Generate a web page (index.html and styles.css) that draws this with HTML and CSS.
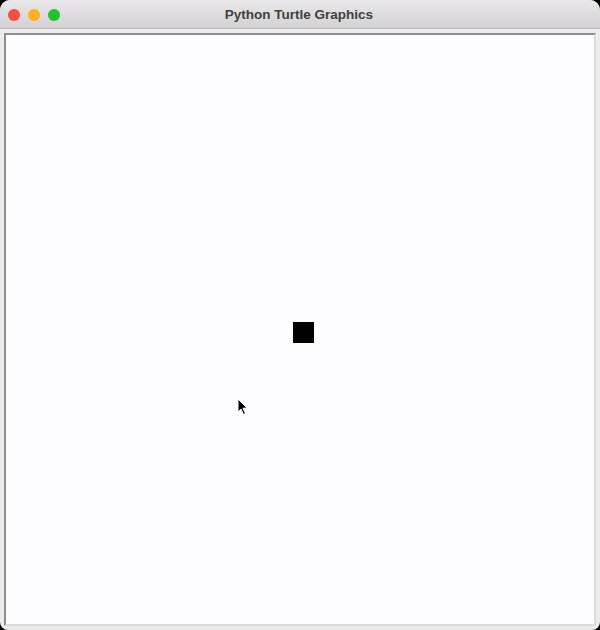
FILE: index.html
```html
<!DOCTYPE html>
<html>
<head>
<meta charset="utf-8">
<link rel="stylesheet" href="styles.css">
</head>
<body>
<div class="window">
  <div class="titlebar">
    <div class="lights">
      <span class="light red"></span>
      <span class="light yellow"></span>
      <span class="light green"></span>
    </div>
    <div class="title">Python Turtle Graphics</div>
  </div>
  <div class="content">
    <div class="canvas">
      <div class="turtle"></div>
      <svg class="cursor" width="12" height="18" viewBox="0 0 12 18">
        <path d="M1 1 L1 14 L4 11 L6.5 16.5 L8.5 15.6 L6 10.2 L10.2 10.2 Z" fill="#000" stroke="#fff" stroke-width="1"/>
      </svg>
    </div>
  </div>
</div>
</body>
</html>
```
FILE: styles.css
```css
html, body {
  margin: 0;
  padding: 0;
  background: #000;
}
.window {
  width: 600px;
  height: 630px;
  border-radius: 10px 10px 8px 8px;
  overflow: hidden;
  background: #ececec;
  display: flex;
  flex-direction: column;
  box-sizing: border-box;
}
.titlebar {
  height: 28px;
  flex: none;
  background: linear-gradient(#e9e7e9, #d3d1d3);
  border-bottom: 1px solid #bdbbbd;
  position: relative;
  display: flex;
  align-items: center;
  justify-content: center;
}
.lights {
  position: absolute;
  left: 8px;
  top: 9px;
  display: flex;
  gap: 8px;
}
.light {
  width: 12px;
  height: 12px;
  border-radius: 50%;
  display: block;
}
.red { background: #fe4a45; }
.yellow { background: #fdb120; }
.green { background: #1fc22a; }
.title {
  font-family: "Liberation Sans", Arial, sans-serif;
  font-weight: bold;
  font-size: 13.5px;
  color: #404040;
  margin-top: 1px;
  margin-left: -2px;
}
.content {
  flex: 1;
  display: flex;
  padding: 4px 4px 4px 4px;
}
.canvas {
  flex: 1;
  position: relative;
  background: #fdfcfe;
  border-top: 2px solid #8f8f8f;
  border-left: 2px solid #8f8f8f;
  border-right: 2px solid #dcdcdc;
  border-bottom: 2px solid #dcdcdc;
}
.turtle {
  position: absolute;
  left: 287px;
  top: 287px;
  width: 21px;
  height: 21px;
  background: #000;
}
.cursor {
  position: absolute;
  left: 231px;
  top: 363px;
}
```
